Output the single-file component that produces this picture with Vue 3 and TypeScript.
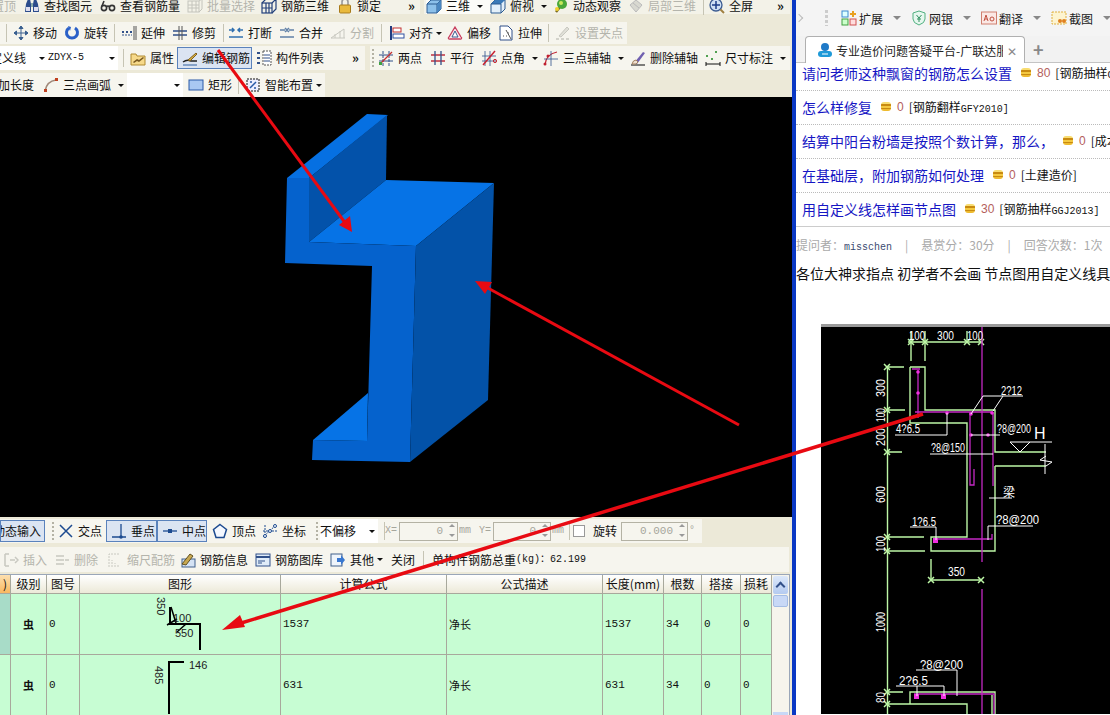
<script setup lang="ts">
type Tool = {
  x: number;
  t?: string;
  en?: string;
  i?: string;
  kind?: string;
  off?: boolean;
  caret?: boolean;
  tight?: boolean;
  ind?: number;
  val?: string;
};
type Band = { x: number; end: number; tools: Tool[] };

// icons are 16x16, drawn by hand
const icons: Record<string, string> = {
  find: '<path d="M2 6l2-5h2l1 5v8H1zM9 6l1-5h2l2 5 1 8H9z" fill="#2b4c8c"/><rect x="7" y="5" width="2" height="4" fill="#8aa"/><rect x="2" y="9" width="4" height="4" fill="#dde"/><rect x="10" y="9" width="4" height="4" fill="#dde"/>',
  view: '<g fill="none" stroke="#333" stroke-width="1.6"><circle cx="4" cy="10" r="2.6"/><circle cx="12" cy="10" r="2.6"/><path d="M6.5 9q1.5-2 3 0M2 8l2-5"/></g>',
  batch: '<g fill="none" stroke="#c4c4bc"><rect x="1" y="3" width="11" height="11"/><path d="M1 7h11M1 10h11M5 3v11M9 3v11"/><path d="M12 3l3-2v10l-3 3"/></g>',
  rebar: '<g fill="none" stroke="#23407a" stroke-width="1.2"><rect x="1" y="5" width="10" height="10"/><path d="M1 5l4-4h10l-4 4M15 1v10l-4 4M5 5v10M8 5v10M1 10h10"/></g>',
  lock: '<path d="M5 7V4a3 3 0 0 1 6 0v3" fill="none" stroke="#999" stroke-width="1.6"/><rect x="2.500" y="7" width="11" height="8" rx="1" fill="#e9b93c" stroke="#a87a1a"/>',
  cube: '<path d="M1 6l4-4h10v9l-4 4H1z" fill="#8cc0ea" stroke="#2a5a90"/><path d="M1 6h10v9M11 6l4-4" fill="none" stroke="#2a5a90"/><path d="M11 6l4-4v9l-4 4z" fill="#4a86c0"/>',
  top: '<path d="M1 6l4-4h10v9l-4 4H1z" fill="#e3f0fa" stroke="#2a5a90"/><path d="M1 6l4-4h10l-4 4z" fill="#3a7ab8"/><path d="M1 6h10v9" fill="none" stroke="#2a5a90"/>',
  orbit: '<path d="M3 14l4-5" stroke="#7a6a20" stroke-width="2.500"/><circle cx="9" cy="6" r="5" fill="#4aa83a"/><circle cx="8" cy="5" r="2" fill="#c8e85a"/><circle cx="4" cy="11" r="2" fill="#f0d030"/>',
  local: '<path d="M2 7l6-5 6 5-6 7z" fill="#d8d8d0" stroke="#bbb"/><path d="M5 5l6 5" stroke="#bbb"/>',
  full: '<circle cx="7" cy="7" r="6" fill="#cfe0f4" stroke="#3a5a90" stroke-width="1.300"/><path d="M7 3v8M3 7h8" stroke="#1c3c88" stroke-width="1.500"/><path d="M11.500 11.500l3.500 3.500" stroke="#a08040" stroke-width="2"/>',
  move: '<path d="M8 1v14M1 8h14M8 1L6 3.500h4zM8 15l-2-2.500h4zM1 8l2.500-2v4zM15 8l-2.500-2v4z" fill="#3a6090" stroke="#3a6090"/>',
  rotate: '<path d="M11 3a5.500 5.500 0 1 1-6 0" fill="none" stroke="#2a60c8" stroke-width="3"/><path d="M4 1l3 1-1 4z" fill="#2a60c8"/>',
  extend: '<path d="M1 7h2M5 7h2M9 7h2" stroke="#30508a" stroke-width="2"/><path d="M1 10h10" stroke="#30508a" stroke-dasharray="2 1"/><path d="M13 1v14M15 1v14" stroke="#555"/>',
  trim: '<path d="M1 6h14M1 10h14" stroke="#30508a" stroke-width="1.400"/><path d="M7 1v14M10 1v14" stroke="#555"/>',
  cut: '<path d="M1 5h5M10 5h5M1 12h14M4 3l2 2-2 2M12 3l-2 2 2 2" fill="none" stroke="#3070b0" stroke-width="1.500"/>',
  merge: '<path d="M1 5h5M10 5h5M1 12h14M6 3l2 2-2 2M10 3L8 5l2 2" fill="none" stroke="#6080a8" stroke-width="1.500"/>',
  split: '<g fill="none" stroke="#c8c8c0"><path d="M1 13h14M1 13l13-9M5 13V9M10 13V6M14 4v9"/></g>',
  align: '<path d="M2 1v14" stroke="#223c80" stroke-width="2"/><rect x="4" y="3" width="8" height="4" fill="#fff" stroke="#c03030"/><rect x="4" y="9" width="11" height="4" fill="#fff" stroke="#3050a0"/>',
  offset: '<path d="M8 2l6 10a1 1 0 0 1-1 2H3a1 1 0 0 1-1-2z" fill="#fbe6ea" stroke="#c84060" stroke-width="1.300"/><path d="M8 6l3 6H5z" fill="#fff" stroke="#3a5a90"/>',
  stretch: '<path d="M2 1h8l4 4v10H2z" fill="#fff" stroke="#30508a"/><path d="M8 5l5 9M5 11h1M8 11h1M10 8h1" stroke="#555"/>',
  grippt: '<path d="M1 14h3M6 14h3M11 14h3" stroke="#c8c8c0" stroke-width="1.500"/><path d="M4 11l8-9 2 2-8 8z" fill="#e0e0d8" stroke="#c8c8c0"/>',
  attr: '<path d="M1 4h5l1 2h8v9H1z" fill="#f6d98a" stroke="#b08a30"/><path d="M3 12l4-3 2 1 4-3 1 1-5 4-2-1-3 2z" fill="#7a5a20"/>',
  edit: '<path d="M1 12q4-3 8-1h6" fill="none" stroke="#222" stroke-width="1.500"/><path d="M6 10L14 3l1 1-7 7z" fill="#d8b040" stroke="#806020"/><path d="M1 15h14" stroke="#3060a0"/>',
  list: '<g fill="#30508a"><rect x="1" y="2" width="3" height="2"/><rect x="1" y="7" width="3" height="2"/><rect x="1" y="12" width="3" height="2"/></g><rect x="7" y="1" width="8" height="14" fill="#fff" stroke="#555" stroke-dasharray="2 1"/><path d="M8 5h6M8 8h6M8 11h6" stroke="#30508a"/>',
  two: '<path d="M5 1v15M11 1v15" stroke="#30508a" stroke-dasharray="3 1"/><path d="M1 5h14M1 11h14" stroke="#30508a"/><path d="M2 14L14 2" stroke="#c83030" stroke-width="1.300"/><rect x="1" y="12" width="3" height="3" fill="#40a040"/>',
  par: '<path d="M1 5h14M1 11h14" stroke="#c03040" stroke-width="1.300"/><path d="M5 1v14M11 1v14" stroke="#30508a" stroke-width="1.300"/>',
  angle: '<path d="M4 1v15M9 1v15M1 6h14M1 11h14" stroke="#30508a" stroke-width=".8"/><path d="M2 15L14 1" stroke="#c82030" stroke-width="1.500"/><circle cx="14" cy="11" r="1.600" fill="none" stroke="#c82030"/>',
  arc3: '<path d="M2 15Q3 4 14 2" fill="none" stroke="#c02030" stroke-width="1.200"/><path d="M8 1v15M1 9h14" stroke="#30508a" stroke-width=".8"/><circle cx="2" cy="14" r="1.500" fill="#c02030"/><circle cx="5" cy="6" r="1.500" fill="#c02030"/>',
  del: '<path d="M1 15h14" stroke="#555" stroke-width="1.500"/><path d="M4 13l9-11 2 1-8 11z" fill="#7060b0"/><path d="M2 14q1-4 4-4l2 2q-1 3-6 2z" fill="#f0e0d0" stroke="#a08060"/>',
  dim: '<path d="M1 12v4M15 12v4M1 14h14" stroke="#111"/><rect x="1" y="5" width="2" height="2" fill="#50a050"/><rect x="10" y="1" width="2" height="2" fill="#50a050"/><rect x="6" y="8" width="2" height="2" fill="#50a050"/>',
  arc: '<path d="M2 14Q4 4 13 3" fill="none" stroke="#a08878" stroke-width="1.600"/><rect x="1" y="12" width="3" height="3" fill="#c04020"/><rect x="12" y="1" width="3" height="3" fill="#c04020"/>',
  rect: '<rect x="1" y="3" width="14" height="10" fill="#a9c8f2" stroke="#2a5aa8"/>',
  smart: '<rect x="2" y="2" width="12" height="12" fill="#eef" stroke="#111" stroke-dasharray="2 1"/><path d="M5 11l6-6M5 5h2M9 11h2" stroke="#2a5aa8" stroke-width="1.500"/>',
  cross: '<path d="M2 2l12 12M14 2L2 14" stroke="#1c4a90" stroke-width="1.500"/>',
  perp: '<path d="M1 14h14M10 1v13" stroke="#1c4a90" stroke-width="1.300"/><circle cx="10" cy="14" r="1.800" fill="#1c4a90"/>',
  mid: '<path d="M1 8h14" stroke="#1c4a90" stroke-width="1.300"/><rect x="6" y="6" width="4" height="4" fill="#1c4a90"/>',
  vertex: '<path d="M8 1.500l6.500 5L12 14.500H4L1.500 6.500z" fill="#f4f8ff" stroke="#1c4a90" stroke-width="1.500"/>',
  coord: '<path d="M1 14L14 2M3 2v13M1 8h14" stroke="#1c4a90" stroke-dasharray="2 1"/><circle cx="3" cy="13" r="1.500" fill="#fff" stroke="#1c4a90"/><circle cx="13" cy="3" r="1.500" fill="#fff" stroke="#1c4a90"/><circle cx="8" cy="8" r="1.500" fill="#fff" stroke="#1c4a90"/>',
  insert: '<path d="M2 2h4M2 14h4M2 2v12M7 8h5M12 5l3 3-3 3" fill="none" stroke="#c8c8c0" stroke-width="1.500"/>',
  remove: '<path d="M2 4h8M2 8h8M2 12h8M11 8h4" fill="none" stroke="#c8c8c0" stroke-width="1.500"/>',
  scale: '<path d="M2 15V2h11M5 15V8M8 15v-4M11 15v-2" fill="none" stroke="#c8c8c0" stroke-dasharray="2 1"/>',
  info: '<rect x="2" y="7" width="13" height="8" fill="#d4e2f4" stroke="#40608c"/><path d="M2 12L10 2l3 2-7 9z" fill="#c8a850" stroke="#605020"/>',
  lib: '<rect x="1" y="2" width="14" height="12" fill="#e0ecf8" stroke="#30508a"/><path d="M1 5h14" stroke="#30508a" stroke-width="2"/><path d="M3 9h7M3 11h4" stroke="#30508a"/>',
  other: '<rect x="1" y="2" width="11" height="12" fill="#eef4fb" stroke="#40608c"/><path d="M7 6h4V3l4 5-4 5v-3H7z" fill="#3a78d0"/>',
};

const place = (bands: Band[]) =>
  bands.map((b, n) => ({
    ...b,
    gap: b.x - (n ? bands[n - 1].end : 0),
    width: b.end - b.x,
    tools: b.tools.map((t, k) => ({
      ...t,
      width: (k + 1 < b.tools.length ? b.tools[k + 1].x : b.end) - t.x,
    })),
  }));

const rows = [
  {
    cls: "r0",
    bands: place([
      {
        x: 0,
        end: 420,
        tools: [
          { x: 0, t: "置顶", off: true, ind: -8 },
          { x: 24, i: "find", t: "查找图元" },
          { x: 100, i: "view", t: "查看钢筋量" },
          { x: 187, i: "batch", t: "批量选择", off: true },
          { x: 261, i: "rebar", t: "钢筋三维" },
          { x: 337, i: "lock", t: "锁定" },
          { x: 408, kind: "more", t: "»" },
        ],
      },
      {
        x: 424,
        end: 790,
        tools: [
          { x: 424 },
          { x: 426, i: "cube", t: "三维", caret: true, kind: "white" },
          { x: 490, i: "top", t: "俯视", caret: true },
          { x: 553, i: "orbit", t: "动态观察" },
          { x: 628, i: "local", t: "局部三维", off: true },
          { x: 703, kind: "sep" },
          { x: 709, i: "full", t: "全屏" },
          { x: 777, kind: "more", t: "»" },
        ],
      },
    ]),
  },
  {
    cls: "r1",
    bands: place([
      {
        x: 0,
        end: 627,
        tools: [
          { x: 0 },
          { x: 6, kind: "sep" },
          { x: 13, i: "move", t: "移动" },
          { x: 64, i: "rotate", t: "旋转" },
          { x: 114, kind: "sep" },
          { x: 121, i: "extend", t: "延伸" },
          { x: 172, i: "trim", t: "修剪" },
          { x: 223, kind: "sep" },
          { x: 228, i: "cut", t: "打断" },
          { x: 279, i: "merge", t: "合并" },
          { x: 330, i: "split", t: "分割", off: true },
          { x: 381, kind: "sep" },
          { x: 389, i: "align", t: "对齐", caret: true, tight: true },
          { x: 447, i: "offset", t: "偏移" },
          { x: 498, i: "stretch", t: "拉伸" },
          { x: 548, kind: "sep" },
          { x: 555, i: "grippt", t: "设置夹点", off: true },
        ],
      },
    ]),
  },
  {
    cls: "r2",
    bands: place([
      {
        x: 0,
        end: 365,
        tools: [
          { x: 0, kind: "combo", t: "定义线", ind: -10, caret: true },
          { x: 48, kind: "combo", en: "ZDYX-5", caret: true },
          { x: 118 },
          { x: 123, kind: "sep" },
          { x: 130, i: "attr", t: "属性" },
          { x: 177, kind: "on", i: "edit", t: "编辑钢筋" },
          { x: 252 },
          { x: 256, i: "list", t: "构件列表" },
          { x: 352, kind: "more", t: "»" },
        ],
      },
      {
        x: 370,
        end: 790,
        tools: [
          { x: 370, kind: "grip" },
          { x: 378, i: "two", t: "两点" },
          { x: 430, i: "par", t: "平行" },
          { x: 481, i: "angle", t: "点角", caret: true },
          { x: 543, i: "arc3", t: "三点辅轴", caret: true },
          { x: 630, i: "del", t: "删除辅轴" },
          { x: 705, i: "dim", t: "尺寸标注", caret: true },
        ],
      },
    ]),
  },
  {
    cls: "r3",
    bands: place([
      {
        x: 0,
        end: 325,
        tools: [
          { x: 0, t: "加长度", ind: -2 },
          { x: 43, i: "arc", t: "三点画弧", caret: true },
          { x: 127, kind: "combo", caret: true },
          { x: 183 },
          { x: 188, i: "rect", t: "矩形" },
          { x: 238, kind: "sep" },
          { x: 245, i: "smart", t: "智能布置", caret: true, tight: true },
        ],
      },
    ]),
  },
];

const lowerRows = [
  {
    cls: "ra",
    bands: place([
      {
        x: 0,
        end: 702,
        tools: [
          { x: 0, kind: "on", t: "动态输入", ind: -12 },
          { x: 45 },
          { x: 50, kind: "grip" },
          { x: 58, i: "cross", t: "交点" },
          { x: 106, kind: "on", i: "perp", t: "垂点" },
          { x: 157, kind: "on", i: "mid", t: "中点" },
          { x: 207 },
          { x: 212, i: "vertex", t: "顶点" },
          { x: 262, i: "coord", t: "坐标" },
          { x: 314, kind: "grip" },
          { x: 320, kind: "combo", t: "不偏移", caret: true },
          { x: 378 },
          { x: 384, kind: "sep" },
          { x: 385, kind: "dim", en: "X=" },
          { x: 399, kind: "input", val: "0" },
          { x: 458, kind: "dim", en: "mm" },
          { x: 478, kind: "dim", en: "Y=" },
          { x: 492, kind: "input", val: "0" },
          { x: 550, kind: "dim", en: "mm" },
          { x: 567, kind: "sep" },
          { x: 571, kind: "check" },
          { x: 591, t: "旋转" },
          { x: 619, kind: "input", val: "0.000" },
          { x: 686, kind: "dim", en: " °" },
        ],
      },
    ]),
  },
  {
    cls: "rb",
    bands: place([
      {
        x: 0,
        end: 789,
        tools: [
          { x: 0 },
          { x: 3, i: "insert", t: "插入", off: true },
          { x: 54, i: "remove", t: "删除", off: true },
          { x: 107, i: "scale", t: "缩尺配筋", off: true },
          { x: 180, i: "info", t: "钢筋信息" },
          { x: 255, i: "lib", t: "钢筋图库" },
          { x: 330, i: "other", t: "其他", caret: true, tight: true },
          { x: 391, t: "关闭" },
          { x: 423, kind: "sep" },
          { x: 432, t: "单构件钢筋总重", en: "(kg)：62.199" },
        ],
      },
    ]),
  },
];

const columns = ["级别", "图号", "图形", "计算公式", "公式描述", "长度(mm)", "根数", "搭接", "损耗"];

const bars = [
  { id: 1, formula: "1537", length: "1537" },
  { id: 2, formula: "631", length: "631" },
];

const browserTools = [
  { i: "ext", t: "扩展" },
  { i: "bank", t: "网银" },
  { i: "trans", t: "翻译" },
  { i: "shot", t: "截图" },
];

const questions = [
  { title: "请问老师这种飘窗的钢筋怎么设置", score: "80", cn: "[钢筋抽样", en: "GGJ2013]" },
  { title: "怎么样修复", score: "0", cn: "[钢筋翻样", en: "GFY2010]" },
  { title: "结算中阳台粉墙是按照个数计算，那么，", score: "0", cn: "[成本管理]", en: "" },
  { title: "在基础层，附加钢筋如何处理", score: "0", cn: "[土建造价]", en: "" },
  { title: "用自定义线怎样画节点图", score: "30", cn: "[钢筋抽样", en: "GGJ2013]" },
];

// drawing labels: page coordinates, rot means read bottom to top
const labels = [
  { x: 909, y: 341, s: "100", len: 16 },
  { x: 937, y: 341, s: "300", len: 17 },
  { x: 967, y: 341, s: "100", len: 16 },
  { x: 1001, y: 396, s: "2?12", len: 21 },
  { x: 896, y: 434, s: "4?6.5", len: 24 },
  { x: 997, y: 434, s: "?8@200", len: 34 },
  { x: 931, y: 453, s: "?8@150", len: 34 },
  { x: 912, y: 527, s: "1?6.5", len: 24 },
  { x: 996, y: 525, s: "?8@200", len: 43 },
  { x: 948, y: 577, s: "350", len: 17 },
  { x: 920, y: 670, s: "?8@200", len: 43 },
  { x: 899, y: 686, s: "2?6.5", len: 29 },
  { x: 885, y: 398, s: "300", len: 18, rot: true },
  { x: 885, y: 423, s: "100", len: 14, rot: true },
  { x: 885, y: 447, s: "200", len: 18, rot: true },
  { x: 885, y: 504, s: "600", len: 17, rot: true },
  { x: 885, y: 553, s: "100", len: 16, rot: true },
  { x: 885, y: 633, s: "1000", len: 20, rot: true },
  { x: 885, y: 704, s: "80", len: 11, rot: true },
];

const ticks = [
  [911, 343], [925, 343], [967, 343], [981, 343],
  [887, 368], [887, 411], [887, 453], [887, 538], [887, 552], [887, 693], [887, 705],
  [931, 581], [981, 581],
];

const dots = [
  [918, 373], [918, 394], [947, 414], [971, 415], [992, 414], [971, 436], [988, 436],
];
</script>

<template>
  <div class="page">
    <section class="app">
      <div v-for="row in rows" :key="row.cls" class="row" :class="row.cls">
        <div
          v-for="band in row.bands"
          :key="band.x"
          class="band"
          :style="{ marginLeft: `${band.gap}px`, width: `${band.width}px` }"
        >
          <div
            v-for="tool in band.tools"
            :key="tool.x"
            class="tool"
            :class="[tool.kind, { off: tool.off }]"
            :style="{ width: `${tool.width}px` }"
          >
            <svg v-if="tool.i" class="ico" viewBox="0 0 16 16" v-html="icons[tool.i]"></svg>
            <span v-if="tool.t" class="lbl" :style="tool.ind ? { marginLeft: `${tool.ind}px` } : undefined">{{ tool.t }}</span>
            <span v-if="tool.en" class="en">{{ tool.en }}</span>
            <i v-if="tool.caret" class="caret" :class="{ tight: tool.tight }"></i>
          </div>
        </div>
      </div>

      <div class="viewport">
        <svg class="model" width="792" height="420" viewBox="0 97 792 420">
          <polygon points="287,178 367,114 388,115 309,178" fill="#0670e2" />
          <polygon points="309,178 387,115 386,180 309,242" fill="#0352aa" />
          <polygon points="309,242 386,180 494,183 416,246" fill="#0673e6" />
          <polygon
            points="287,178 309,178 309,242 416,246 410,462 312,460 313,440 367,441 372,266 285,263"
            fill="#0562cd"
          />
          <polygon points="416,246 494,183 488,400 410,462" fill="#0352a8" />
          <polygon points="313,440 368,393 367,441" fill="#0673e6" />
        </svg>
      </div>

      <div v-for="row in lowerRows" :key="row.cls" class="row" :class="row.cls">
        <div
          v-for="band in row.bands"
          :key="band.x"
          class="band"
          :style="{ marginLeft: `${band.gap}px`, width: `${band.width}px` }"
        >
          <div
            v-for="tool in band.tools"
            :key="tool.x"
            class="tool"
            :class="[tool.kind, { off: tool.off }]"
            :style="{ width: `${tool.width}px` }"
          >
            <svg v-if="tool.i" class="ico" viewBox="0 0 16 16" v-html="icons[tool.i]"></svg>
            <span v-if="tool.t" class="lbl" :style="tool.ind ? { marginLeft: `${tool.ind}px` } : undefined">{{ tool.t }}</span>
            <span v-if="tool.en" class="en">{{ tool.en }}</span>
            <i v-if="tool.caret" class="caret" :class="{ tight: tool.tight }"></i>
            <template v-if="tool.kind === 'input'">
              <span class="val">{{ tool.val }}</span>
              <span class="spin"><b></b><u></u></span>
            </template>
            <span v-if="tool.kind === 'check'" class="box"></span>
          </div>
        </div>
      </div>

      <div class="table-wrap">
        <div class="grid">
          <div class="th first">)</div>
          <div v-for="c in columns" :key="c" class="th">{{ c }}</div>

          <template v-for="bar in bars" :key="bar.id">
            <div class="td" :class="{ picked: bar.id === 1 }"></div>
            <div class="td mid">虫</div>
            <div class="td">0</div>
            <div class="td shape">
              <svg v-if="bar.id === 1" width="200" height="60" viewBox="81 594 200 60">
                <path d="M201 650V624H171V607" fill="none" stroke="#000" stroke-width="2" />
                <path d="M172 607l5 16M168 625l10-6M178 632l9-8" fill="none" stroke="#000" stroke-width="1.500" />
                <text x="0" y="0" transform="translate(158 597) rotate(90)" class="dimtxt">350</text>
                <text x="174" y="622" class="dimtxt">100</text>
                <text x="176" y="637" class="dimtxt">550</text>
              </svg>
              <svg v-else width="200" height="60" viewBox="81 654 200 60">
                <path d="M170 713V661H185" fill="none" stroke="#000" stroke-width="2" />
                <text x="190" y="668" class="dimtxt">146</text>
                <text x="0" y="0" transform="translate(156 665) rotate(90)" class="dimtxt">485</text>
              </svg>
            </div>
            <div class="td">{{ bar.formula }}</div>
            <div class="td">净长</div>
            <div class="td">{{ bar.length }}</div>
            <div class="td">34</div>
            <div class="td">0</div>
            <div class="td">0</div>
          </template>
        </div>
        <div class="scroll">
          <div class="sc-up"><i></i></div>
          <div class="sc-thumb"></div>
          <div class="sc-track"></div>
          <div class="sc-down"></div>
        </div>
      </div>
    </section>

    <div class="divider"></div>

    <section class="browser">
      <div class="b-tools">
        <span class="chev"></span>
        <span class="dots"></span>
        <div v-for="b in browserTools" :key="b.i" class="b-tool">
          <svg class="ico" viewBox="0 0 16 16">
            <template v-if="b.i === 'ext'">
              <rect x="1" y="1" width="6" height="6" fill="#dff" stroke="#3a8ad0" />
              <rect x="1" y="9" width="6" height="6" fill="#cfc" stroke="#40a040" />
              <rect x="9" y="9" width="6" height="6" fill="#fdd" stroke="#d05050" />
              <path d="M12 1v6M9 4h6" stroke="#e8a020" stroke-width="2" />
            </template>
            <template v-else-if="b.i === 'bank'">
              <path d="M8 1l6 2v6q0 4-6 6-6-2-6-6V3z" fill="#e6f7ee" stroke="#50b080" />
              <path d="M5.500 5L8 8l2.500-3M8 8v4M6 9h4" fill="none" stroke="#309060" />
            </template>
            <template v-else-if="b.i === 'trans'">
              <rect x=".5" y="2" width="15" height="12" fill="#fbe8e4" stroke="#d08070" />
              <path d="M3 11l2-6 2 6M4 9h2" fill="none" stroke="#c05040" />
              <circle cx="11" cy="9" r="2" fill="none" stroke="#c05040" />
            </template>
            <template v-else>
              <rect x="1" y="2" width="14" height="12" fill="#fdf4d0" stroke="#e0b040" stroke-dasharray="2 1" />
              <circle cx="9" cy="11" r="2" fill="#e08020" />
              <circle cx="13" cy="11" r="2" fill="#e08020" />
            </template>
          </svg>
          <span>{{ b.t }}</span>
          <i class="b-caret"></i>
        </div>
      </div>

      <div class="b-tabs">
        <div class="tab">
          <svg class="ico" viewBox="0 0 16 16">
            <circle cx="8" cy="5" r="4" fill="#1f7ac8" />
            <rect x="1" y="9" width="14" height="6" rx="3" fill="#1f9ad8" />
            <path d="M5 12h6" stroke="#fff" />
          </svg>
          <span class="tab-t">专业造价问题答疑平台-广联达服务新干线</span>
          <span class="tab-x">✕</span>
        </div>
        <span class="tab-add">+</span>
      </div>

      <ul class="qlist">
        <li v-for="q in questions" :key="q.title" class="q">
          <a class="q-t">{{ q.title }}</a>
          <i class="coin"></i>
          <span class="q-s">{{ q.score }}</span>
          <span class="q-c">{{ q.cn }}<span class="en">{{ q.en }}</span></span>
        </li>
      </ul>

      <div class="meta">
        <span>提问者：<b class="who">misschen</b></span>
        <span class="pipe">|</span>
        <span>悬赏分：30分</span>
        <span class="pipe">|</span>
        <span>回答次数：1次</span>
      </div>
      <p class="body">各位大神求指点 初学者不会画 节点图用自定义线具体怎么画</p>

      <div class="drawing">
        <svg width="289" height="390" viewBox="821 325 289 390">
          <rect x="821" y="325" width="289" height="3" fill="#9a9a9a" />
          <g fill="none" stroke="#bdf7a6" stroke-width="1.400">
            <path d="M908 343H983M911 332V362M925 332V362M967 332V342" />
            <path d="M910 368H925V411H995V453H1046M995 467H1046M995 467V552H931V538H967V424H910V368" />
            <path d="M887.500 368V715M888 368H904M888 411H905M888 453H902M888 538H924M888 552H925M888 693H903M888 705H967V715" />
            <path d="M931 560V581M931 581H982M910 705V693H995V715M992 696V715" />
          </g>
          <g stroke="#bdf7a6" stroke-width="1.500">
            <path
              v-for="p in ticks"
              :key="`${p[0]}-${p[1]}`"
              :d="`M${p[0] - 3} ${p[1] - 3}l6 6M${p[0] + 3} ${p[1] - 3}l-6 6`"
            />
          </g>
          <g fill="none" stroke="#c428c4" stroke-width="1.300">
            <path d="M982 328V563M982 590V715" />
            <path d="M918 371V419M912 370H920M915 413H993M970 413V486H974V470M993 413V487" />
            <path d="M936 540H992V535M914 695H994V715" />
          </g>
          <g fill="#f030e0">
            <circle v-for="p in dots" :key="`${p[0]}-${p[1]}`" :cx="p[0]" :cy="p[1]" r="1.800" />
            <rect x="933" y="539" width="5" height="5" />
            <rect x="914" y="695" width="5" height="5" />
            <rect x="941" y="695" width="5" height="5" />
          </g>
          <g fill="none" stroke="#fff" stroke-width="1">
            <path d="M971 415L983 397H1023M993 412L1003 397" />
            <path d="M895 436H947V414M971 436H1000M930 455H993" />
            <path d="M1010 443H1052M1010 443L1020 453L1030 443M1045 445V475" />
            <path d="M1046 457L1040 461L1052 463L1046 467" />
            <path d="M989 499H1012M910 528H936V541M1033 527H988V541" />
            <path d="M916 671H957V697M896 687H944V697M917 687V697" />
          </g>
          <g class="cad">
            <text
              v-for="l in labels"
              :key="`${l.x}-${l.y}`"
              :x="l.x"
              :y="l.y"
              :textLength="l.len"
              lengthAdjust="spacingAndGlyphs"
              :transform="l.rot ? `rotate(-90 ${l.x} ${l.y})` : undefined"
            >{{ l.s }}</text>
            <text x="1034" y="440" class="big">H</text>
            <text x="1003" y="498" class="cn">梁</text>
          </g>
        </svg>
      </div>
    </section>

    <svg class="arrows" width="1110" height="715" viewBox="0 0 1110 715">
      <g stroke="#e80a12" stroke-width="3" fill="#e80a12">
        <path d="M218 50L346 224" />
        <path d="M739 425L486 287" />
        <path d="M923 414L238 624" stroke-width="3.500" />
      </g>
      <g fill="#e80a12">
        <polygon points="352,232 339,225 350,216" />
        <polygon points="475,281 492,282 485,294" />
        <polygon points="222,630 240,615 245,627" />
      </g>
    </svg>
  </div>
</template>

<style scoped>
.page {
  position: relative;
  display: flex;
  width: 1110px;
  height: 715px;
  overflow: hidden;
  font-family: "Noto Sans CJK SC", "Liberation Sans", sans-serif;
  font-size: 12px;
  color: #111;
}
.app {
  display: flex;
  flex-direction: column;
  width: 792px;
  flex: none;
  background: #ece9d8;
}
.row {
  display: flex;
  flex: none;
}
.r0 { height: 12px; margin-bottom: 10px; }
.r1 { height: 22px; margin-bottom: 2px; }
.r2 { height: 24px; margin-bottom: 3px; }
.r3 { height: 24px; }
.ra { height: 24px; margin-top: 2px; }
.rb { height: 25px; margin-top: 4px; margin-bottom: 2px; }
.r0 .band { background: #f3f2e8; height: 16px; margin-top: -2px; }
.band {
  display: flex;
  align-items: center;
  background: #f6f5ee;
  flex: none;
}
.tool {
  display: flex;
  align-items: center;
  flex: none;
  height: 100%;
  box-sizing: border-box;
  white-space: nowrap;
  line-height: 16px;
}
.ico {
  width: 16px;
  height: 16px;
  flex: none;
  margin-right: 4px;
}
.off { color: #b4b4ac; }
.en {
  font-family: "Liberation Mono", "Noto Sans CJK SC", monospace;
  font-size: 10px;
}
.caret {
  width: 0;
  height: 0;
  margin-left: 7px;
  border: 3px solid transparent;
  border-top: 3px solid #111;
  border-bottom: 0;
}
.caret.tight { margin-left: 3px; }
.sep::before {
  content: "";
  width: 1px;
  height: 18px;
  background: #c6c4b4;
}
.grip::before {
  content: "";
  width: 2px;
  height: 18px;
  margin-left: 2px;
  background: repeating-linear-gradient(#b4b2a4 0 2px, transparent 2px 4px);
}
.more { font-weight: 700; font-size: 13px; }
.combo {
  background: #fff;
  padding-right: 3px;
  overflow: hidden;
}
.combo .caret { margin-left: auto; }
.white { background: #fcfcf8; }
.on {
  height: 22px;
  padding-left: 4px;
  background: #dbe4f2;
  border: 1px solid #5a82bc;
  overflow: hidden;
}
.dim { color: #a6a69c; }
.input {
  position: relative;
  height: 19px;
  margin-right: 1px;
  border: 1px solid #b4b2a4;
  background: #f6f5ee;
  color: #a6a69c;
  justify-content: flex-end;
  padding-right: 14px;
}
.input .val {
  font-family: "Liberation Mono", monospace;
  font-size: 11px;
}
.spin {
  position: absolute;
  top: 1px;
  right: 2px;
  display: flex;
  flex-direction: column;
  gap: 7px;
}
.spin b, .spin u {
  width: 0;
  height: 0;
  border: 3px solid transparent;
}
.spin b { border-bottom: 3px solid #999; border-top: 0; }
.spin u { border-top: 3px solid #999; border-bottom: 0; }
.box {
  width: 10px;
  height: 10px;
  border: 1px solid #999;
  background: #fff;
}
.viewport {
  flex: none;
  height: 420px;
  background: #000;
}
.model { display: block; }

.table-wrap {
  display: flex;
  flex: 1;
  min-height: 0;
  width: 790px;
  border-top: 1px solid #9aa6b8;
  box-sizing: border-box;
  border-right: 1px solid #9aa6b8;
}
.grid {
  display: grid;
  grid-template-columns: 11px 36px 33px 201px 166px 156px 61px 38px 39px 31px;
  grid-template-rows: 19px 61px 61px;
  width: 772px;
  flex: none;
}
.th, .td {
  box-sizing: border-box;
  border-right: 1px solid #a8a89c;
  border-bottom: 1px solid #a8a89c;
  display: flex;
  align-items: center;
  overflow: hidden;
}
.th {
  justify-content: center;
  background: linear-gradient(#fff, #ece9d8);
  white-space: nowrap;
  line-height: 16px;
}
.th.first { background: linear-gradient(#fde0b0, #f8b860); }
.td {
  background: #c7fdd3;
  padding-left: 2px;
  font-family: "Liberation Mono", "Noto Sans CJK SC", monospace;
  font-size: 11px;
}
.td.picked { background: #a8dcc8; }
.td.mid { justify-content: center; font-family: "Noto Sans CJK SC", sans-serif; font-size: 11px; font-weight: 700; padding: 0; }
.td.shape { padding: 0; }
.dimtxt {
  font-family: "Liberation Sans", sans-serif;
  font-size: 11px;
  fill: #222;
}
.scroll {
  display: flex;
  flex-direction: column;
  flex: 1;
  background: #f6f4ec;
}
.sc-up {
  display: flex;
  justify-content: center;
  padding-top: 7px;
  box-sizing: border-box;
  height: 18px;
  margin: 1px 1px 0;
  border-radius: 2px;
  background: linear-gradient(#dce8fa, #b4caf0);
}
.sc-up i {
  width: 5px;
  height: 5px;
  border-top: 2px solid #33518a;
  border-left: 2px solid #33518a;
  transform: rotate(45deg);
}
.sc-thumb {
  height: 10px;
  margin: 1px 1px 0;
  background: #c8d8f6;
  border: 1px solid #a4bce4;
  border-radius: 2px;
}
.sc-track { flex: 1; }
.sc-down { height: 3px; margin: 0 1px; background: #c8d8f6; }

.divider {
  width: 4px;
  flex: none;
  background: #0a38c4;
}
.browser {
  display: flex;
  flex-direction: column;
  flex: 1;
  min-width: 0;
  overflow: hidden;
  background: #fff;
}
.b-tools {
  display: flex;
  align-items: center;
  height: 36px;
  flex: none;
  background: #f4f4f4;
  color: #222;
}
.chev {
  width: 5px;
  height: 5px;
  flex: none;
  border-top: 1px solid #bbb;
  border-right: 1px solid #bbb;
  transform: rotate(45deg);
}
.dots {
  width: 3px;
  height: 16px;
  flex: none;
  margin: 0 13px 0 23px;
  background: repeating-linear-gradient(#ccc 0 3px, transparent 3px 5px);
}
.b-tool {
  display: flex;
  align-items: center;
  width: 70px;
  flex: none;
}
.b-tool .ico { margin-right: 2px; }
.b-caret {
  width: 0;
  height: 0;
  margin-left: 10px;
  border: 4px solid transparent;
  border-top: 4px solid #888;
  border-bottom: 0;
}
.b-tabs {
  position: relative;
  z-index: 1;
  display: flex;
  align-items: flex-end;
  height: 27px;
  flex: none;
  padding-left: 9px;
  background: #f2f2f2;
  border-bottom: 1px solid #c4c4c4;
  box-sizing: border-box;
}
.tab {
  display: flex;
  align-items: center;
  width: 220px;
  height: 27px;
  margin-bottom: -1px;
  padding-left: 11px;
  box-sizing: border-box;
  background: #fff;
  border: 1px solid #b0b0b0;
  border-bottom: 0;
  border-radius: 4px 4px 0 0;
}
.tab .ico { margin-right: 3px; }
.tab-t {
  width: 167px;
  flex: none;
  overflow: hidden;
  white-space: nowrap;
  color: #222;
}
.tab-x {
  margin-left: 4px;
  color: #888;
  font-size: 12px;
}
.tab-add {
  align-self: center;
  margin-left: 8px;
  color: #888;
  font-size: 18px;
  font-weight: 700;
  line-height: 18px;
}
.qlist {
  margin: -6px 0 0;
  padding: 0;
  list-style: none;
}
.q {
  display: flex;
  align-items: center;
  height: 34px;
  padding: 0 0 2px 6px;
  box-sizing: border-box;
  border-bottom: 1px dotted #bbb;
  white-space: nowrap;
}
.q:last-child { border-bottom: 1px solid #ccc; }
.q-t {
  font-size: 14px;
  color: #1616c4;
}
.coin {
  width: 10px;
  height: 9px;
  margin-left: 9px;
  flex: none;
  border-radius: 3px;
  background: linear-gradient(#f8dc70 0 25%, #c88a10 25% 40%, #f4c840 40% 65%, #c88a10 65% 80%, #eebb30 80%);
}
.q-s {
  margin-left: 6px;
  color: #b4605c;
  font-family: "Liberation Sans", sans-serif;
  font-size: 12px;
}
.q-c {
  margin-left: 5px;
  color: #111;
}
.meta {
  display: flex;
  align-items: center;
  height: 30px;
  margin-top: 2px;
  flex: none;
  color: #aaa;
  white-space: nowrap;
}
.who {
  font-family: "Liberation Mono", monospace;
  font-size: 10px;
  font-weight: 400;
  color: #3a4a70;
}
.pipe { margin: 0 13px; }
.body {
  margin: 3px 0 0;
  height: 22px;
  flex: none;
  font-size: 14px;
  line-height: 22px;
  white-space: nowrap;
  color: #111;
}
.drawing {
  flex: none;
  margin: 40px 0 0 25px;
  height: 390px;
  background: #000;
}
.drawing svg { display: block; }
.cad text {
  font-family: "Liberation Sans", sans-serif;
  font-size: 13px;
  fill: #fff;
}
.cad .big { font-size: 16px; }
.cad .cn { font-family: "Noto Sans CJK SC", sans-serif; font-size: 12px; }
.arrows {
  position: absolute;
  top: 0;
  left: 0;
  pointer-events: none;
}
</style>

<style>
html, body { margin: 0; overflow: hidden; }
</style>
